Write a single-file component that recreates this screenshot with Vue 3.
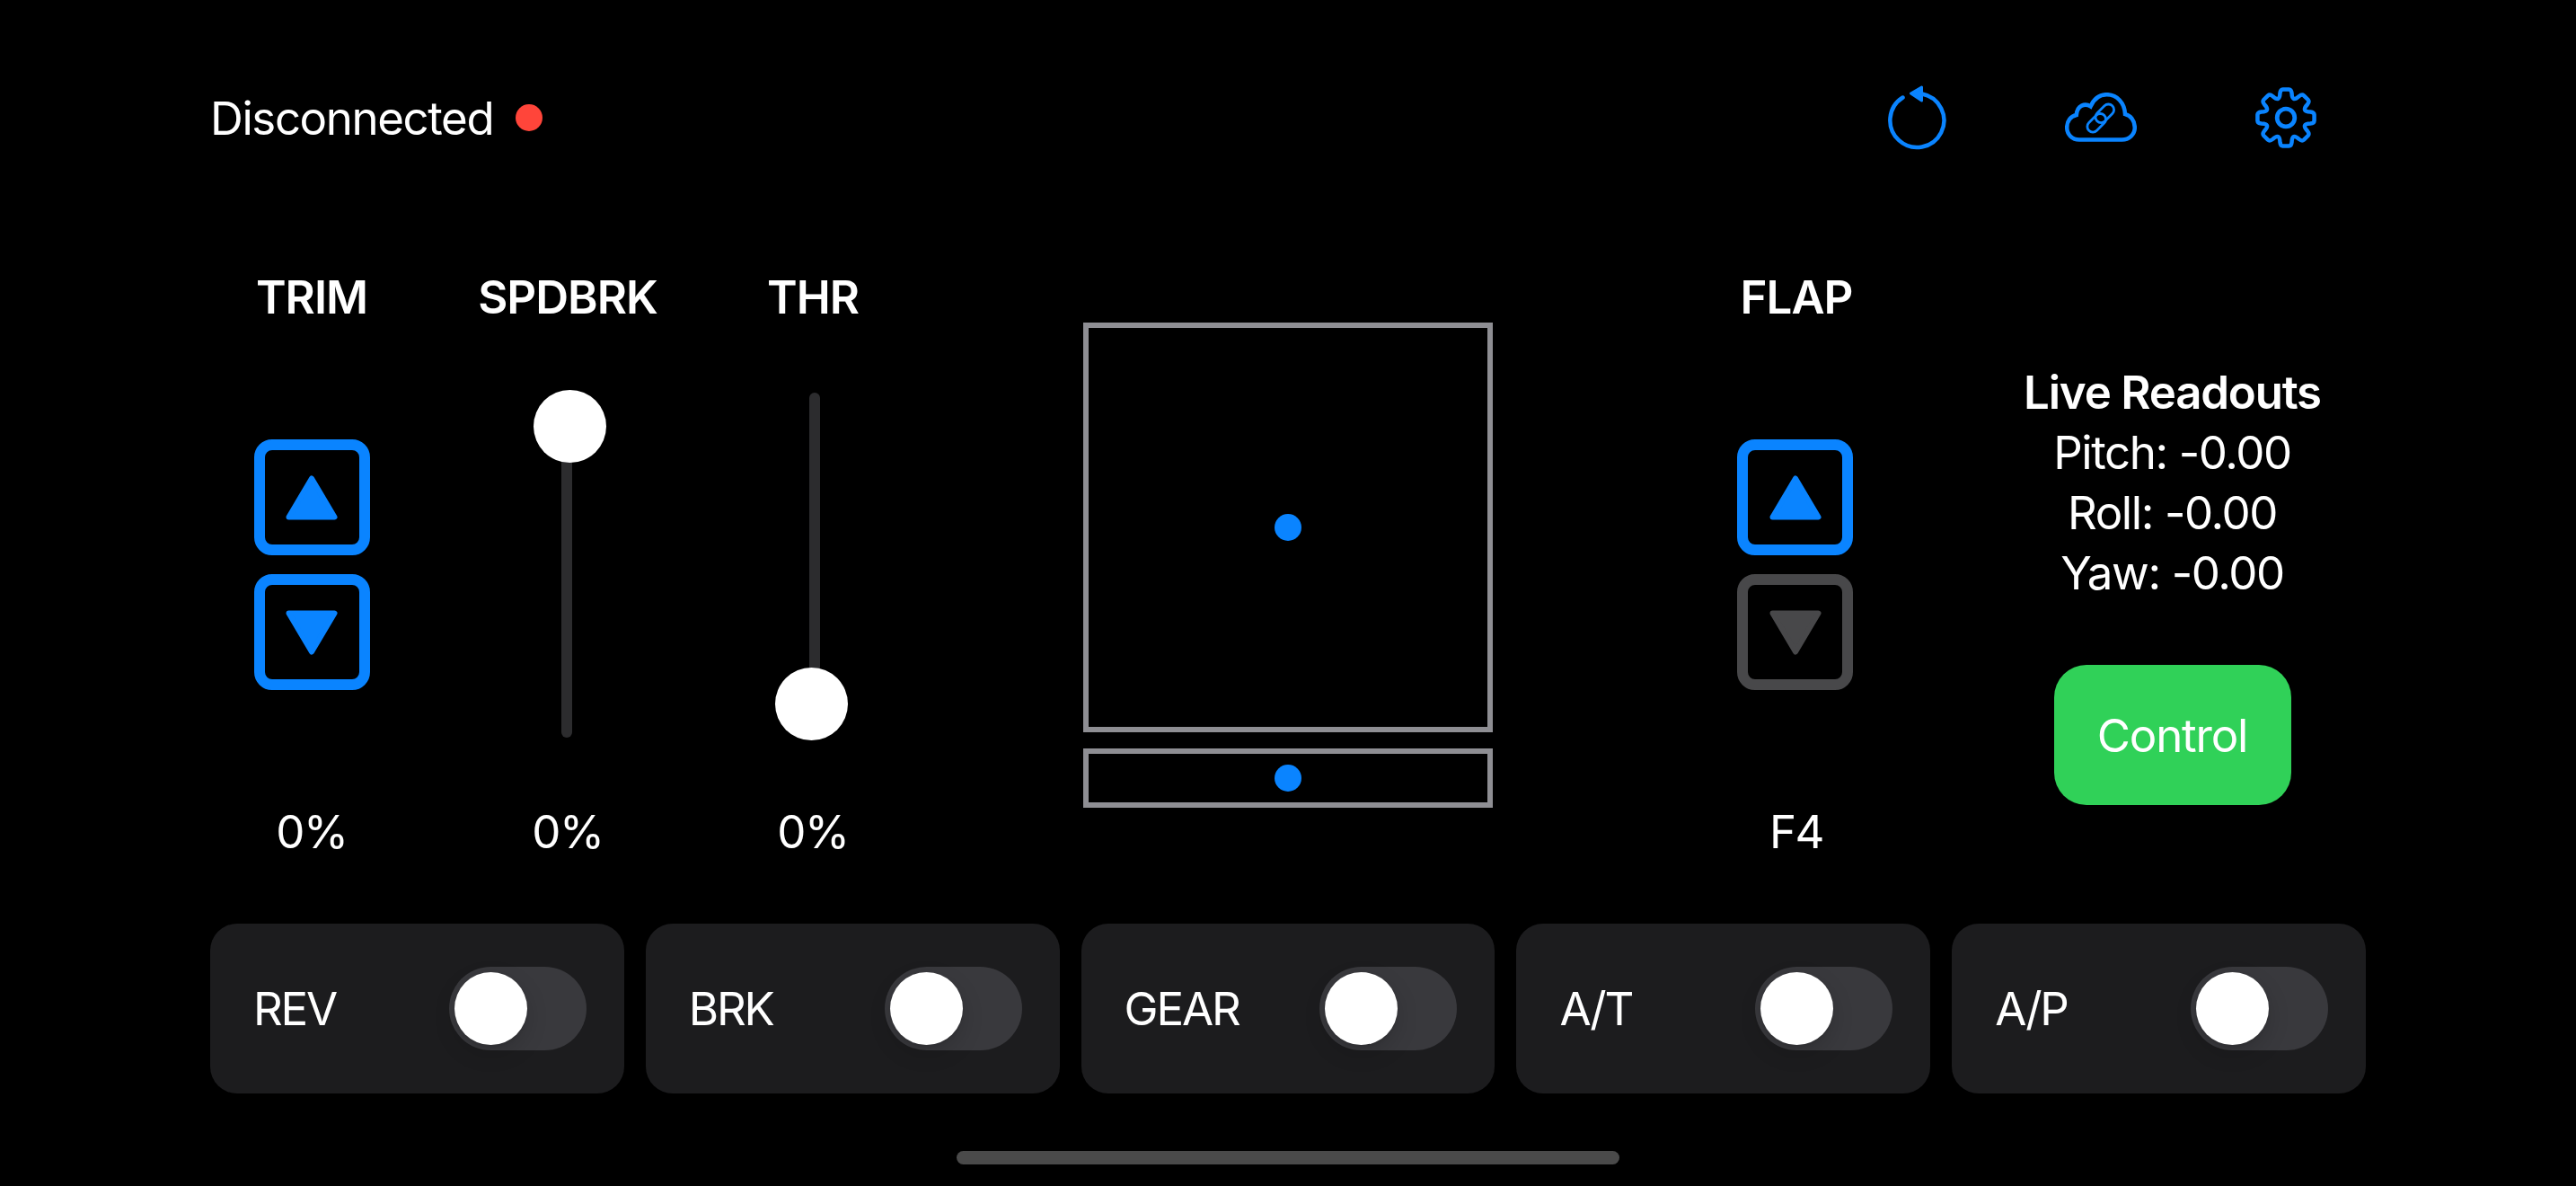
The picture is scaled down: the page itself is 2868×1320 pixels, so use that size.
<template>
  <div class="screen">
    <!-- top bar -->
    <header class="topbar">
      <div class="status">
        <span>Disconnected</span>
        <i class="status-dot"></i>
      </div>
      <div class="top-icons">
        <svg class="icon-reset" viewBox="0 0 72 72" fill="none">
          <path d="M18.5 13.5A30 30 0 1 0 40 9.5" stroke="#0a84ff" stroke-width="4.5" stroke-linecap="round" />
          <path d="M27.5 9L39.5 2V17Z" fill="#0a84ff" stroke="#0a84ff" stroke-width="3" stroke-linejoin="round" />
        </svg>
        <svg class="icon-cloud" viewBox="0 0 80 56" fill="none" stroke="#0a84ff">
          <path
            d="M16 52.5H63.5C71.5 52.5 77.8 46.5 77.8 39C77.8 31 73 25.5 67 24C66.5 11.5 58 2.2 46.5 2.2C38.5 2.2 32 7.5 28.5 15.5C22.5 11.5 13.5 14 12.8 25C6.5 26.5 2.2 31.5 2.2 39C2.2 46.5 8 52.5 16 52.5Z"
            stroke-width="4.5"
          />
          <rect x="-12" y="-6.2" width="24" height="12.4" rx="6.2" stroke-width="2.8" transform="translate(44.3 23.3) rotate(-45)" />
          <rect x="-12" y="-6.2" width="24" height="12.4" rx="6.2" stroke-width="2.8" transform="translate(35.2 33.8) rotate(-45)" />
        </svg>
        <svg class="icon-gear" viewBox="0 0 68 68" fill="none" stroke="#0a84ff" stroke-width="4.5" stroke-linejoin="round">
          <path :d="gearPath" />
          <circle cx="34" cy="34" r="9.8" stroke-width="4.8" />
        </svg>
      </div>
    </header>

    <!-- controls -->
    <main class="controls">
      <section class="col col-trim">
        <h3 class="col-label">TRIM</h3>
        <div class="col-body">
          <div class="stepper">
            <button class="step"><svg viewBox="0 0 58 50"><polygon points="29,3.5 54.5,46.5 3.5,46.5" /></svg></button>
            <button class="step"><svg viewBox="0 0 58 50"><polygon points="29,46.5 54.5,3.5 3.5,3.5" /></svg></button>
          </div>
        </div>
        <div class="col-value">0%</div>
      </section>

      <section class="col col-spd">
        <h3 class="col-label">SPDBRK</h3>
        <div class="col-body">
          <div class="slider slider-spd"><i class="knob knob-top"></i></div>
        </div>
        <div class="col-value">0%</div>
      </section>

      <section class="col col-thr">
        <h3 class="col-label">THR</h3>
        <div class="col-body">
          <div class="slider slider-thr"><i class="knob knob-bottom"></i></div>
        </div>
        <div class="col-value">0%</div>
      </section>

      <section class="col col-stick">
        <div class="stick-pad"><i class="stick-dot"></i></div>
        <div class="yaw-pad"><i class="stick-dot"></i></div>
      </section>

      <section class="col col-flap">
        <h3 class="col-label">FLAP</h3>
        <div class="col-body">
          <div class="stepper">
            <button class="step"><svg viewBox="0 0 58 50"><polygon points="29,3.5 54.5,46.5 3.5,46.5" /></svg></button>
            <button class="step disabled"><svg viewBox="0 0 58 50"><polygon points="29,46.5 54.5,3.5 3.5,3.5" /></svg></button>
          </div>
        </div>
        <div class="col-value">F4</div>
      </section>

      <section class="col col-readouts">
        <div class="readouts">
          <div class="readouts-title">Live Readouts</div>
          <div v-for="r in readouts" :key="r">{{ r }}</div>
        </div>
        <button class="control-btn">Control</button>
      </section>
    </main>

    <!-- toggles -->
    <div class="toggles">
      <div class="toggle-card" v-for="t in toggles" :key="t">
        <span>{{ t }}</span>
        <div class="switch"><i class="switch-thumb"></i></div>
      </div>
    </div>

    <div class="home-bar"></div>
  </div>
</template>

<script setup>
const readouts = ['Pitch: -0.00', 'Roll: -0.00', 'Yaw: -0.00']
const toggles = ['REV', 'BRK', 'GEAR', 'A/T', 'A/P']

// gear outline, 8 teeth around the centre of a 68 box
const polar = (r, deg) => {
  const a = (deg * Math.PI) / 180
  return `${(34 + r * Math.sin(a)).toFixed(2)} ${(34 - r * Math.cos(a)).toFixed(2)}`
}
let gear = ''
for (let i = 0; i < 8; i++) {
  const a = i * 45
  gear += `${i === 0 ? 'M' : 'L'}${polar(31.75, a - 6)}`
  gear += `L${polar(31.75, a + 6)}`
  gear += `Q${polar(32, a + 11)} ${polar(28, a + 13.5)}`
  gear += `Q${polar(18, a + 22.5)} ${polar(28, a + 31.5)}`
  gear += `Q${polar(32, a + 34)} ${polar(31.75, a + 39)}`
}
const gearPath = gear + 'Z'
</script>

<style>
html,
body {
  margin: 0;
  background: #000;
}
</style>

<style scoped>
.screen {
  position: relative;
  width: 2868px;
  height: 1320px;
  box-sizing: border-box;
  padding: 95px 234px 0;
  overflow: hidden;
  background: #000;
  color: #fff;
  font-family: Inter, "Liberation Sans", sans-serif;
  font-size: 51px;
}

.topbar {
  display: flex;
  justify-content: space-between;
  align-items: center;
  height: 72px;
  padding-right: 55px;
}

.status {
  display: flex;
  align-items: center;
  gap: 25px;
  letter-spacing: -1.4px;
}

.status-dot {
  width: 30px;
  height: 30px;
  border-radius: 50%;
  background: #ff453a;
}

.top-icons {
  display: flex;
  align-items: center;
  gap: 127px;
}

.icon-reset {
  width: 72px;
  height: 72px;
}

.icon-cloud {
  width: 80px;
  height: 56px;
  margin-right: 5px;
}

.icon-gear {
  width: 68px;
  height: 68px;
}

.controls {
  display: flex;
  height: 655px;
  margin-top: 134px;
}

.col {
  display: flex;
  flex-direction: column;
  align-items: center;
}

.col-trim {
  width: 226px;
}

.col-spd {
  width: 344px;
}

.col-thr {
  width: 202px;
}

.col-stick {
  width: 856px;
  justify-content: center;
  gap: 18px;
}

.col-flap {
  width: 276px;
}

.col-flap .stepper {
  margin-left: -3px;
}

.col-readouts {
  width: 496px;
  box-sizing: border-box;
  padding: 102px 0 0 65px;
}

.col-label {
  margin: 0;
  height: 60px;
  line-height: 60px;
  font-size: 51px;
  font-weight: 600;
  letter-spacing: -1px;
}

.col-body {
  flex: 1;
  display: flex;
  align-items: center;
  justify-content: center;
}

.col-value {
  height: 60px;
  line-height: 60px;
  letter-spacing: -1.5px;
}

.stepper {
  display: flex;
  flex-direction: column;
  gap: 21px;
}

.step {
  display: flex;
  align-items: center;
  justify-content: center;
  width: 129px;
  height: 129px;
  padding: 0;
  border: 12px solid #0a84ff;
  border-radius: 20px;
  background: none;
  fill: #0a84ff;
  stroke: #0a84ff;
}

.step svg {
  width: 58px;
  height: 50px;
  stroke-width: 6;
  stroke-linejoin: round;
}

.step.disabled {
  border-color: #48484a;
  fill: #48484a;
  stroke: #48484a;
}

.slider {
  position: relative;
  width: 12px;
  height: 384px;
  border-radius: 6px;
  background: #2c2c2e;
}

.slider-spd {
  margin-left: -2px;
}

.slider-thr {
  margin-left: 4px;
}

.knob {
  position: absolute;
  width: 81px;
  height: 81px;
  border-radius: 50%;
  background: #fff;
}

.knob-top {
  top: -3px;
  left: -31.5px;
}

.knob-bottom {
  bottom: -3px;
  left: -38px;
}

.stick-pad,
.yaw-pad {
  display: flex;
  align-items: center;
  justify-content: center;
  box-sizing: border-box;
  width: 456px;
  border: 6px solid #8e8e93;
}

.stick-pad {
  height: 456px;
}

.yaw-pad {
  height: 66px;
}

.stick-dot {
  width: 30px;
  height: 30px;
  border-radius: 50%;
  background: #0a84ff;
}

.readouts {
  text-align: center;
  line-height: 67px;
  letter-spacing: -1.4px;
}

.readouts-title {
  font-weight: 600;
  letter-spacing: -1.2px;
}

.control-btn {
  width: 264px;
  height: 156px;
  margin-top: 69px;
  padding: 0;
  border: none;
  border-radius: 36px;
  background: #30d158;
  color: #fff;
  font: inherit;
  letter-spacing: -1.2px;
}

.toggles {
  display: flex;
  gap: 24px;
  margin-top: 72px;
}

.toggle-card {
  flex: 1;
  display: flex;
  align-items: center;
  justify-content: space-between;
  box-sizing: border-box;
  height: 189px;
  padding: 0 42px 0 48px;
  border-radius: 30px;
  background: #1c1c1e;
  letter-spacing: -2.2px;
}

.switch {
  width: 153px;
  height: 93px;
  box-sizing: border-box;
  padding: 6px;
  border-radius: 46.5px;
  background: #39393d;
}

.switch-thumb {
  display: block;
  width: 81px;
  height: 81px;
  border-radius: 50%;
  background: #fff;
  box-shadow: 0 9px 24px rgba(0, 0, 0, 0.15), 0 3px 3px rgba(0, 0, 0, 0.06);
}

.home-bar {
  position: absolute;
  left: 1065px;
  bottom: 24px;
  width: 738px;
  height: 15px;
  border-radius: 8px;
  background: #4a4a4a;
}
</style>
